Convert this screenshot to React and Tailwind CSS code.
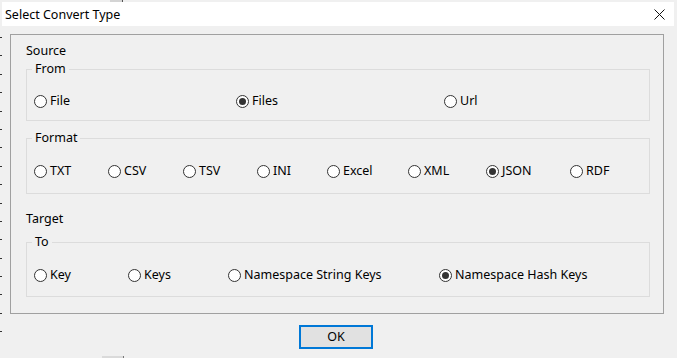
const FONT = { fontFamily: '"Noto Sans", "Liberation Sans", sans-serif' };

const fromOptions = [
  { label: 'File', w: 'w-[202px]' },
  { label: 'Files', w: 'w-[208px]', checked: true },
  { label: 'Url', w: 'w-[100px]' },
];

const formatOptions = [
  { label: 'TXT', w: 'w-[74px]' },
  { label: 'CSV', w: 'w-[75px]' },
  { label: 'TSV', w: 'w-[74px]' },
  { label: 'INI', w: 'w-[70px]' },
  { label: 'Excel', w: 'w-[81px]' },
  { label: 'XML', w: 'w-[78px]' },
  { label: 'JSON', w: 'w-[84px]', checked: true },
  { label: 'RDF', w: 'w-[60px]' },
];

const toOptions = [
  { label: 'Key', w: 'w-[94px]' },
  { label: 'Keys', w: 'w-[100px]' },
  { label: 'Namespace String Keys', w: 'w-[211px]' },
  { label: 'Namespace Hash Keys', w: 'w-[160px]', checked: true },
];

function Radio({ label, checked, w }) {
  return (
    <div className={`flex items-center gap-[3px] shrink-0 ${w}`}>
      <span className="w-[13px] h-[13px] rounded-full border border-[#333333] bg-white flex items-center justify-center shrink-0">
        {checked && <span className="w-[7px] h-[7px] rounded-full bg-[#333333]" />}
      </span>
      <span className="text-[12.5px] leading-[16px] text-black whitespace-nowrap">{label}</span>
    </div>
  );
}

// group box with its caption sitting on the top border
function Group({ title, options, h, rowTop }) {
  return (
    <div className={`border border-[#dcdcdc] w-[624px] ${h} pl-[7px]`}>
      <div className="-mt-[9px] -ml-[2px] px-[3px] w-fit bg-[#f0f0f0] text-[12.5px] leading-[16px] text-black">
        {title}
      </div>
      <div className={`flex h-[16px] items-center ${rowTop}`}>
        {options.map((o) => (
          <Radio key={o.label} {...o} />
        ))}
      </div>
    </div>
  );
}

export default function App() {
  const ticks = Array.from({ length: 17 });
  return (
    <div className="w-[677px] h-[358px] bg-[#f0f0f0] flex overflow-hidden" style={FONT}>
      {/* left edge of the window behind */}
      <div className="w-[2px] shrink-0 flex flex-col gap-[17.4px] pt-[37px]">
        {ticks.map((_, i) => (
          <span key={i} className="block w-[2px] h-[1px] bg-[#333333]" />
        ))}
      </div>

      <div className="flex flex-col w-[675px]">
        <div className="h-[2px] flex">
          <span className="ml-[108px] w-[13px] h-[2px] bg-[#d4d4d4] border-r border-[#555555]" />
        </div>

        {/* title bar */}
        <div className="h-[24px] w-[672px] bg-white flex items-center justify-between pl-[3px] pr-[9px]">
          <span className="text-[12.5px] text-black leading-[16px] mt-[1px]">Select Convert Type</span>
          <svg width="11" height="11" viewBox="0 0 11 11" className="mt-[1px]">
            <path d="M0.5 0.5 L10.5 10.5 M10.5 0.5 L0.5 10.5" stroke="#111" strokeWidth="1" />
          </svg>
        </div>

        {/* main panel */}
        <div className="ml-[8px] mt-[8px] w-[654px] h-[280px] border border-[#a0a0a0] pl-[15px] pt-[8px]">
          <div className="text-[12.5px] leading-[16px] text-black">Source</div>
          <div className="mt-[10px]">
            <Group title="From" options={fromOptions} h="h-[52px]" rowTop="mt-[16px]" />
          </div>
          <div className="mt-[17px]">
            <Group title="Format" options={formatOptions} h="h-[56px]" rowTop="mt-[17px]" />
          </div>
          <div className="mt-[17px] text-[12.5px] leading-[16px] text-black">Target</div>
          <div className="mt-[15px]">
            <Group title="To" options={toOptions} h="h-[55px]" rowTop="mt-[17px]" />
          </div>
        </div>

        <div className="mt-[9px] ml-[297px]">
          <button className="w-[74px] h-[24px] border-2 border-[#0078d7] bg-[#e1e1e1] text-[12.5px] text-black leading-[16px]">
            OK
          </button>
        </div>

        <div className="mt-auto flex">
          <span className="ml-[100px] w-[22px] h-[2px] bg-[#dadada] border-r border-[#777777]" />
        </div>
      </div>
    </div>
  );
}
